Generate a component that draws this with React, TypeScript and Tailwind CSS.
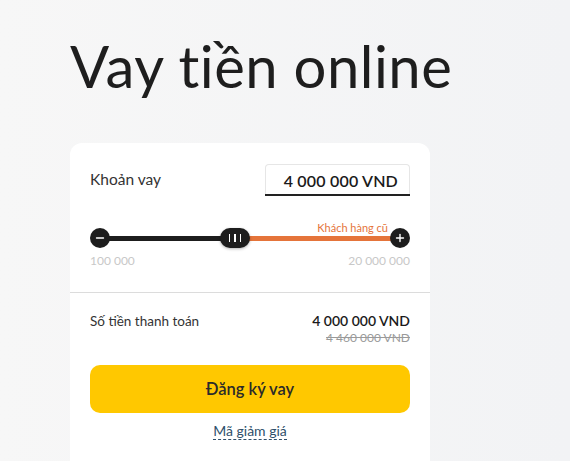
import React from 'react'

const font = { fontFamily: 'Lato, "Noto Sans", sans-serif' }

function RoundButton({ sign }: { sign: 'minus' | 'plus' }) {
  return (
    <div className="w-5 h-5 rounded-full bg-[#1d1d1d] flex items-center justify-center shrink-0 relative z-10">
      <svg width="10" height="10" viewBox="0 0 10 10" aria-hidden="true">
        <path d="M1.5 5h7" stroke="#fff" strokeWidth="1.4" strokeLinecap="round" />
        {sign === 'plus' && <path d="M5 1.5v7" stroke="#fff" strokeWidth="1.4" strokeLinecap="round" />}
      </svg>
    </div>
  )
}

function Slider() {
  return (
    <div className="mt-[32px]">
      <div className="relative flex items-center">
        <RoundButton sign="minus" />
        {/* filled part */}
        <div className="h-[5px] bg-[#1d1d1d] w-[112px] -mx-px" />
        {/* thumb */}
        <div className="w-[30px] h-5 rounded-full bg-[#1d1d1d] flex items-center justify-center gap-[4px] shrink-0 relative z-10 shadow-[0_1px_3px_rgba(0,0,0,0.3)]">
          <span className="w-[1.5px] h-[8px] bg-white" />
          <span className="w-[1.5px] h-[8px] bg-white" />
          <span className="w-[1.5px] h-[8px] bg-white" />
        </div>
        <div className="h-[5px] bg-[#e5743a] flex-1 -mx-px" />
        <RoundButton sign="plus" />
        <span className="absolute right-[22px] -top-[6px] text-[11px] leading-none text-[#e5743a]">Khách hàng cũ</span>
      </div>
      <div className="flex justify-between mt-[7px] text-[12px] leading-none text-[#c8c8c8]">
        <span>100 000</span>
        <span>20 000 000</span>
      </div>
    </div>
  )
}

export default function App() {
  return (
    <div className="w-[570px] h-[461px] overflow-hidden bg-gradient-to-r from-[#f7f7f7] to-[#f2f3f5]" style={font}>
      <div className="pl-[70px] pt-[31px]">
        <h1 className="text-[58px] leading-[70px] font-normal text-[#1e1e1e] tracking-[0.5px]">Vay tiền online</h1>

        <div className="mt-[42px] w-[360px] h-[400px] bg-white rounded-t-[12px]">
          <div className="px-5 pt-[21px] pb-[25px] border-b border-[#dcdcdc]">
            <div className="flex items-center justify-between">
              <span className="text-[15.5px] text-[#333]">Khoản vay</span>
              <div className="w-[145px] h-[32px] border border-[#e6e6e6] border-b-0 rounded-t-[4px] relative flex items-center justify-end pr-[11px]">
                <span className="text-[16px] font-semibold text-[#1a1a1a] tracking-[0.2px]">4 000 000 VND</span>
                <span className="absolute left-[-1px] right-[-1px] bottom-0 h-[2px] bg-[#222]" />
              </div>
            </div>
            <Slider />
          </div>

          <div className="px-5 pt-[20px]">
            <div className="flex justify-between items-start">
              <span className="text-[13.5px] text-[#333] leading-[16px]">Số tiền thanh toán</span>
              <div className="flex flex-col items-end">
                <span className="text-[14px] font-semibold text-[#1a1a1a] leading-[16px]">4 000 000 VND</span>
                <span className="text-[12px] text-[#9a9a9a] line-through leading-[14px] mt-[2px]">4 460 000 VND</span>
              </div>
            </div>
            <button className="mt-[20px] w-full h-[48px] rounded-[10px] bg-[#ffc800] text-[16.5px] font-semibold text-[#2a2a2a]">
              Đăng ký vay
            </button>
            <div className="flex justify-center mt-[9px]">
              <span className="text-[14px] text-[#2e4f6b] border-b border-dashed border-[#2e4f6b] leading-[17px]">Mã giảm giá</span>
            </div>
          </div>
        </div>
      </div>
    </div>
  )
}
